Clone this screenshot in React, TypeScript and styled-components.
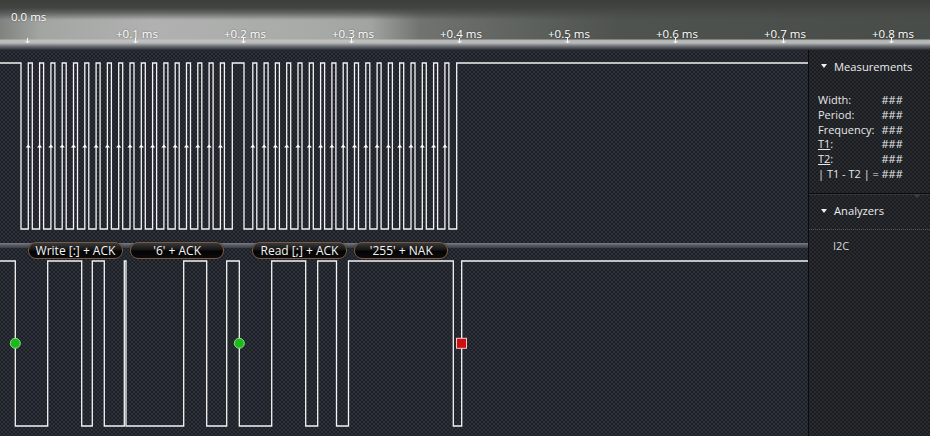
import React from "react";
import styled, { createGlobalStyle, css } from "styled-components";

const GlobalStyle = createGlobalStyle`
  html, body { margin: 0; padding: 0; background: #1d2026; }
  body { overflow: hidden; }
  * { box-sizing: border-box; }
`;

const dotted = (base: string, dot: string) => css`
  background-color: ${base};
  background-image: radial-gradient(${dot} 0.8px, transparent 1.2px),
    radial-gradient(${dot} 0.8px, transparent 1.2px);
  background-size: 4px 4px;
  background-position: 0 0, 2px 2px;
`;

const Screen = styled.div`
  width: 930px;
  height: 436px;
  display: flex;
  flex-direction: column;
  font-family: "Open Sans", "Noto Sans", sans-serif;
  color: #e8e8e8;
  overflow: hidden;
`;

const Ruler = styled.div`
  position: relative;
  flex: none;
  height: 50px;
  background:
    linear-gradient(to bottom, transparent 0 39px, rgba(196, 197, 196, 0.85) 40px, #b9bab9 43px, #85888c 45px, #5c5f64 47px, #3b3e44 49px, #262930 50px),
    linear-gradient(to bottom, #3c3e3c 0px, #434543 8px, rgba(70, 72, 70, 0.7) 13px, rgba(80, 82, 80, 0) 20px, rgba(0, 0, 0, 0) 100%),
    linear-gradient(to right, #7f827f 0px, #a3a5a3 40px, #b0b1b0 150px, #a9aba9 300px, #a2a4a2 370px, #70736f 420px, #5f635f 520px, #4f534f 620px, #494d49 930px);
`;

const TickLabel = styled.span<{ $main?: boolean }>`
  position: absolute;
  top: ${(p) => (p.$main ? 8 : 25)}px;
  font-size: 11.5px;
  line-height: 17px;
  color: #ffffff;
  white-space: nowrap;
  text-shadow: 0 0 2px rgba(0, 0, 0, 0.45);
`;

const TickArrow = styled.svg`
  position: absolute;
  top: 38px;
  width: 5px;
  height: 6px;
  overflow: visible;
`;

const Body = styled.div`
  flex: 1;
  display: flex;
  min-height: 0;
`;

const WaveArea = styled.div`
  width: 808px;
  flex: none;
  display: flex;
  flex-direction: column;
  ${dotted("#1c1f26", "#2d3139")}
`;

const SclTrack = styled.div`
  height: 193px;
  flex: none;
`;

const DecodeBand = styled.div`
  height: 5px;
  flex: none;
  background: linear-gradient(to bottom, #7a7d82, #55585e 50%, #3a3d43);
`;

const SdaTrack = styled.div`
  position: relative;
  flex: 1;
`;

const Wave = styled.svg`
  display: block;
`;

const Pill = styled.div`
  position: absolute;
  top: -6px;
  height: 17px;
  display: flex;
  align-items: center;
  justify-content: center;
  border: 1px solid #7d5a41;
  border-radius: 8px;
  background: linear-gradient(to bottom, #3a3a3a 0%, #151515 45%, #030303 55%, #0c0c0c 100%);
  box-shadow: 0 0 1px rgba(0, 0, 0, 0.8);
  font-size: 12px;
  line-height: 15px;
  color: #f4f4f4;
  white-space: nowrap;
`;

const Panel = styled.div`
  flex: 1;
  display: flex;
  flex-direction: column;
  border-left: 1px solid #0b0c0f;
  ${dotted("#1b1d21", "#272a2f")}
  font-size: 11px;
  color: #e6e6e6;
`;

const SectionHeader = styled.div`
  height: 32px;
  display: flex;
  align-items: center;
  gap: 7px;
  padding-left: 12px;
  font-size: 11.2px;
  color: #ececec;
`;

const Caret = styled.svg`
  width: 6px;
  height: 4px;
  flex: none;
`;

const MeasureGrid = styled.div`
  margin-top: 11px;
  padding-left: 9px;
  display: grid;
  grid-template-columns: 63.5px auto;
  line-height: 14.8px;
  white-space: nowrap;
`;

const Under = styled.span`
  text-decoration: underline;
`;

const Separator = styled.div`
  position: relative;
  margin-top: 11px;
  height: 2px;
  border-top: 1px solid #0a0b0d;
  border-bottom: 1px solid #33363b;
  &::after {
    content: "";
    position: absolute;
    right: 9px;
    top: 0;
    border-left: 4px solid transparent;
    border-right: 4px solid transparent;
    border-top: 4px solid #3a3d42;
  }
`;

const DottedRule = styled.div`
  margin-top: 2px;
  border-top: 1px dotted #55585e;
`;

const AnalyzerItem = styled.div`
  margin-top: 8px;
  padding-left: 24px;
  line-height: 16px;
  font-size: 11px;
  color: #d6d6d6;
`;

const TICKS = Array.from({ length: 9 }, (_, i) => ({
  x: 27.3 + 108 * i,
  label: i === 0 ? "0.0 ms" : `+0.${i} ms`,
  main: i === 0,
}));

const STEP = 11.3;
const GROUPS = [28.3, 252.8];

const SCL_HI = 13;
const SCL_LO = 179;

function sclPath(): string {
  let d = `M0 ${SCL_HI} H21 V${SCL_LO}`;
  GROUPS.forEach((start, gi) => {
    for (let i = 0; i < 18; i++) {
      const x = start + i * STEP;
      d += ` H${x.toFixed(1)} V${SCL_HI} H${(x + 4).toFixed(1)} V${SCL_LO}`;
    }
    if (gi === 0) d += ` H232.3 V${SCL_HI} H244 V${SCL_LO}`;
    else d += ` H456.7 V${SCL_HI} H808`;
  });
  return d;
}

const SDA_HI = 13;
const SDA_LO = 178;
const SDA_EDGES = [15.3, 47.7, 81.7, 92.3, 104.3, 124.3, 126, 183.7, 206.7, 226.7, 239.3, 271.7, 305.7, 317.7, 336.5, 348.5, 453.3, 461.7];

function sdaPath(): string {
  let d = `M0 ${SDA_HI}`;
  let high = true;
  SDA_EDGES.forEach((x) => {
    high = !high;
    d += ` H${x} V${high ? SDA_HI : SDA_LO}`;
  });
  d += " H808";
  return d;
}

const FRAMES = [
  { x: 28.3, w: 94.4, text: "Write [:] + ACK" },
  { x: 130, w: 94.3, text: "'6' + ACK" },
  { x: 252.3, w: 94.4, text: "Read [;] + ACK" },
  { x: 354.3, w: 94, text: "'255' + NAK" },
];

const MEASURES: { label: React.ReactNode; value: string }[] = [
  { label: "Width:", value: "###" },
  { label: "Period:", value: "###" },
  { label: "Frequency:", value: "###" },
  { label: <><Under>T1</Under>:</>, value: "###" },
  { label: <><Under>T2</Under>:</>, value: "###" },
  { label: "| T1 - T2 | =", value: "###" },
];

function CaretDown() {
  return (
    <Caret viewBox="0 0 6 4">
      <polygon points="0,0 6,0 3,4" fill="#f0f0f0" />
    </Caret>
  );
}

export default function App() {
  const risingEdges: number[] = [];
  GROUPS.forEach((start) => {
    for (let i = 0; i < 18; i++) risingEdges.push(start + i * STEP);
  });

  return (
    <Screen>
      <GlobalStyle />
      <Ruler>
        {TICKS.map((t) => (
          <React.Fragment key={t.label}>
            <TickLabel $main={t.main} style={{ left: t.x - (t.main ? 16.3 : 19.3) }}>
              {t.label}
            </TickLabel>
            <TickArrow viewBox="0 0 5 6" style={{ left: t.x - 2.5 }}>
              <path d="M2.5 0 V5 M0.5 3 L2.5 5 L4.5 3" stroke="#ffffff" strokeWidth="1" fill="none" />
            </TickArrow>
          </React.Fragment>
        ))}
      </Ruler>
      <Body>
        <WaveArea>
          <SclTrack>
            <Wave width="808" height="193" viewBox="0 0 808 193">
              <path d={sclPath()} stroke="#f4f4f4" strokeWidth="1.3" fill="none" />
              {risingEdges.map((x) => (
                <polygon
                  key={x}
                  points={`${x - 2.6},97.6 ${x},94.4 ${x + 2.6},97.6`}
                  fill="#ffffff"
                />
              ))}
            </Wave>
          </SclTrack>
          <DecodeBand />
          <SdaTrack>
            <Wave width="808" height="188" viewBox="0 0 808 188">
              <path d={sdaPath()} stroke="#f4f4f4" strokeWidth="1.3" fill="none" />
              <circle cx="15.3" cy="95.3" r="5" fill="#1cb81c" stroke="#8fe08f" strokeWidth="1" />
              <circle cx="239.3" cy="95.3" r="5" fill="#1cb81c" stroke="#8fe08f" strokeWidth="1" />
              <rect x="456.5" y="90.3" width="10" height="10" fill="#cc1010" stroke="#f3c6c6" strokeWidth="1" />
            </Wave>
            {FRAMES.map((f) => (
              <Pill key={f.text} style={{ left: f.x, width: f.w }}>
                {f.text}
              </Pill>
            ))}
          </SdaTrack>
        </WaveArea>
        <Panel>
          <SectionHeader>
            <CaretDown />
            Measurements
          </SectionHeader>
          <MeasureGrid>
            {MEASURES.map((m, i) => (
              <React.Fragment key={i}>
                <span>{m.label}</span>
                <span>{m.value}</span>
              </React.Fragment>
            ))}
          </MeasureGrid>
          <Separator />
          <SectionHeader>
            <CaretDown />
            Analyzers
          </SectionHeader>
          <DottedRule />
          <AnalyzerItem>I2C</AnalyzerItem>
        </Panel>
      </Body>
    </Screen>
  );
}
